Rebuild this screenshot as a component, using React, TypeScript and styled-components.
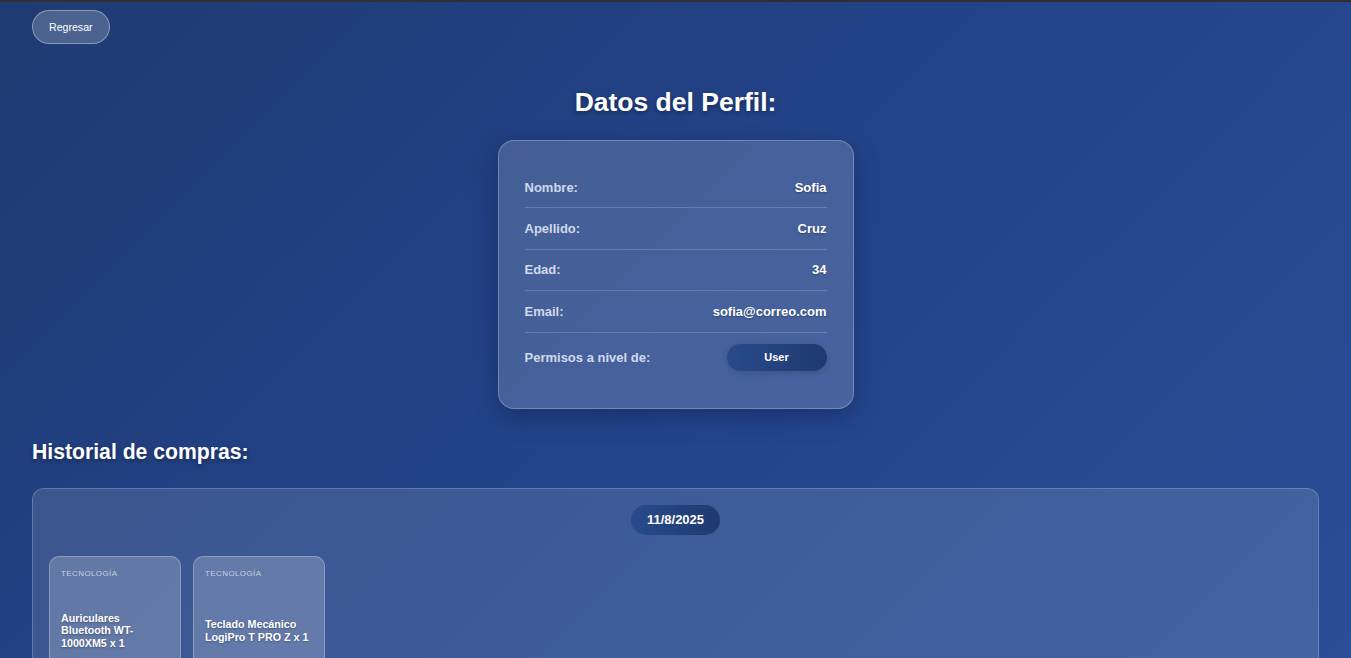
import React from 'react'
import styled, { createGlobalStyle } from 'styled-components'

const GlobalStyle = createGlobalStyle`
  html, body {
    margin: 0;
    padding: 0;
  }
  body {
    font-family: "Liberation Sans", Arial, sans-serif;
    color: #ffffff;
    background: linear-gradient(135deg, #1f3b73 0%, #23438a 50%, #2a4f97 100%);
    min-height: 100vh;
    border-top: 2px solid #2f3036;
    box-sizing: border-box;
  }
`

const Page = styled.div`
  padding: 8px 32px 0 32px;
  display: flex;
  flex-direction: column;
`

const BackButton = styled.button`
  align-self: flex-start;
  height: 34px;
  padding: 0 16px;
  border-radius: 17px;
  border: 1px solid rgba(255, 255, 255, 0.35);
  background: rgba(255, 255, 255, 0.2);
  color: #ffffff;
  font-family: inherit;
  font-size: 10.6px;
  cursor: pointer;
`

const Title = styled.h1`
  margin: 43px 0 23px;
  text-align: center;
  font-size: 26.5px;
  font-weight: 700;
  line-height: 30px;
  text-shadow: 0 2px 4px rgba(0, 0, 0, 0.35);
`

const ProfileCard = styled.div`
  align-self: center;
  width: 356px;
  box-sizing: border-box;
  padding: 26px;
  border-radius: 16px;
  border: 1px solid rgba(255, 255, 255, 0.25);
  background: rgba(255, 255, 255, 0.16);
  box-shadow: 0 8px 24px rgba(10, 20, 60, 0.35);
`

const Row = styled.div<{ $last?: boolean }>`
  display: flex;
  justify-content: space-between;
  align-items: center;
  padding: ${(p) => (p.$last ? '11px 0' : '0')};
  height: ${(p) => (p.$last ? 'auto' : '40.4px')};
  border-bottom: ${(p) => (p.$last ? 'none' : '1px solid rgba(255, 255, 255, 0.18)')};
  font-size: 13px;
  font-weight: 700;
`

const Label = styled.span`
  color: rgba(235, 240, 255, 0.85);
`

const Value = styled.span`
  color: #ffffff;
  text-shadow: 0 1px 2px rgba(0, 0, 0, 0.3);
`

const RoleBadge = styled.div`
  width: 100px;
  height: 27px;
  border-radius: 14px;
  background: linear-gradient(90deg, #284a8c, #1f3a70);
  display: flex;
  align-items: center;
  justify-content: center;
  font-size: 11px;
  font-weight: 700;
  box-shadow: 0 2px 6px rgba(0, 0, 0, 0.15);
`

const SectionTitle = styled.h2`
  margin: 29px 0 22px;
  font-size: 21.2px;
  font-weight: 700;
  line-height: 28px;
  text-shadow: 0 2px 4px rgba(0, 0, 0, 0.35);
`

const HistoryPanel = styled.div`
  border-radius: 12px;
  border: 1px solid rgba(255, 255, 255, 0.2);
  background: rgba(255, 255, 255, 0.12);
  padding: 16px 16px 20px;
  display: flex;
  flex-direction: column;
`

const DateBadge = styled.div`
  align-self: center;
  width: 89px;
  height: 30px;
  border-radius: 15px;
  background: linear-gradient(90deg, #284a8c, #1f3a70);
  display: flex;
  align-items: center;
  justify-content: center;
  font-size: 13px;
  font-weight: 700;
  margin-bottom: 21px;
`

const ProductGrid = styled.div`
  display: flex;
  gap: 12px;
`

const ProductCard = styled.div`
  width: 132px;
  box-sizing: border-box;
  padding: 12px 11px;
  border-radius: 10px;
  border: 1px solid rgba(255, 255, 255, 0.28);
  background: rgba(255, 255, 255, 0.2);
  display: flex;
  flex-direction: column;
`

const Category = styled.div`
  font-size: 8px;
  letter-spacing: 0.4px;
  text-transform: uppercase;
  color: rgba(225, 228, 240, 0.8);
  line-height: 10px;
`

const ProductName = styled.div`
  min-height: 104px;
  display: flex;
  align-items: center;
  font-size: 10.7px;
  font-weight: 700;
  line-height: 12.7px;
  text-shadow: 0 1px 2px rgba(0, 0, 0, 0.3);
`

const profile = [
  ['Nombre:', 'Sofia'],
  ['Apellido:', 'Cruz'],
  ['Edad:', '34'],
  ['Email:', 'sofia@correo.com'],
]

const purchases = [
  { category: 'Tecnología', name: 'Auriculares Bluetooth WT-1000XM5 x 1' },
  { category: 'Tecnología', name: 'Teclado Mecánico LogiPro T PRO Z x 1' },
]

const App = () => {
  return (
    <>
      <GlobalStyle />
      <Page>
        <BackButton>Regresar</BackButton>
        <Title>Datos del Perfil:</Title>
        <ProfileCard>
          {profile.map(([label, value]) => (
            <Row key={label}>
              <Label>{label}</Label>
              <Value>{value}</Value>
            </Row>
          ))}
          <Row $last>
            <Label>Permisos a nivel de:</Label>
            <RoleBadge>User</RoleBadge>
          </Row>
        </ProfileCard>
        <SectionTitle>Historial de compras:</SectionTitle>
        <HistoryPanel>
          <DateBadge>11/8/2025</DateBadge>
          <ProductGrid>
            {purchases.map((p) => (
              <ProductCard key={p.name}>
                <Category>{p.category}</Category>
                <ProductName>{p.name}</ProductName>
              </ProductCard>
            ))}
          </ProductGrid>
        </HistoryPanel>
      </Page>
    </>
  )
}

export default App
